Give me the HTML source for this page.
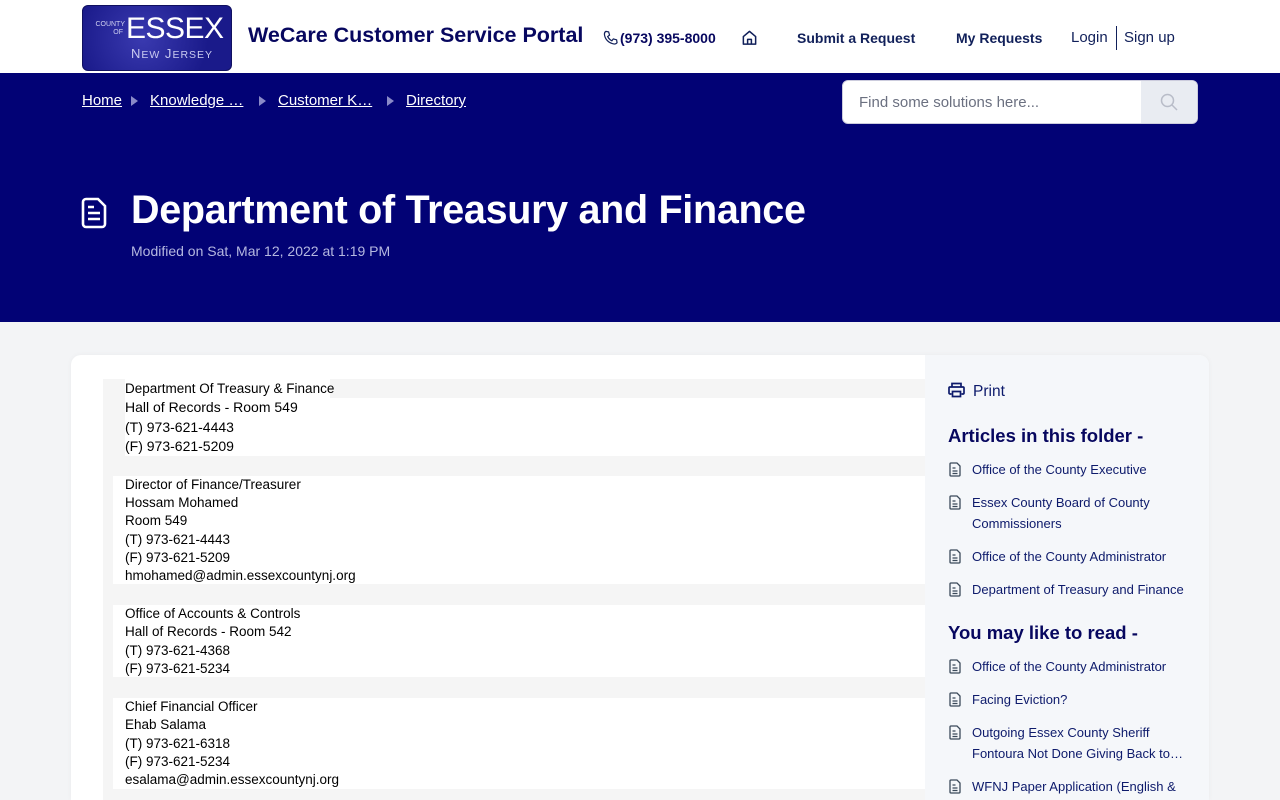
<!DOCTYPE html>
<html style="overflow:hidden;width:1280px;height:800px"><head><meta charset="utf-8"><style>
*{margin:0;padding:0;box-sizing:border-box}
body{width:1280px;height:800px;overflow:hidden;background:#f3f4f6;font-family:"Liberation Sans",sans-serif;position:relative}
.hdr{position:absolute;left:0;top:0;width:1280px;height:73px;background:#fff}
.logo{position:absolute;left:82px;top:5px;width:150px;height:66px;border-radius:6px;background:radial-gradient(circle at 40% 50%,#3a3ab0,#1a1a8a 70%);border:1px solid #101060;overflow:hidden}
.hero{position:absolute;left:0;top:73px;width:1280px;height:249px;background:#020275}
.nav{position:absolute;top:30px;font-size:14px;color:#11205a}
.bc{position:absolute;top:92px;font-size:15px;color:#fff;text-decoration:underline}
.tri{position:absolute;top:96px;width:0;height:0;border-left:7px solid #8a8ac8;border-top:5px solid transparent;border-bottom:5px solid transparent}
.card{position:absolute;left:71px;top:355px;width:1138px;height:445px;background:#fff;border-radius:10px 10px 0 0;overflow:hidden;box-shadow:0 0 6px rgba(0,0,0,.04)}
.side{position:absolute;left:925px;top:355px;width:284px;height:445px;background:#f5f7fa;border-top-right-radius:10px}
.t{position:absolute;font-size:14px;color:#000;line-height:18.5px;left:125px}
.blk{position:absolute;left:113px;width:812px;background:#fff}
.sl{position:absolute;left:972px;font-size:13px;color:#0d1a6b;line-height:21px;width:225px}
.ic{position:absolute;left:949px;width:12px;height:15px}
h3{position:absolute;left:948px;font-size:18.5px;color:#07075f;font-weight:bold}
</style></head><body>
<div class="hdr">
 <div class="logo">
  <div style="position:absolute;left:4px;top:15px;font-size:7px;color:#cfd0f0;line-height:8px;text-align:right;width:38px">COUNTY<br><span style="padding-right:2px">OF</span></div>
  <div style="position:absolute;left:43px;top:6px;font-size:30px;color:#fff;letter-spacing:-0.5px">ESSEX</div>
  <div style="position:absolute;left:48px;top:40px;font-size:13px;color:#c9caf0;letter-spacing:1px">N<span style="font-size:10.5px">EW</span> J<span style="font-size:10.5px">ERSEY</span></div>
 </div>
 <div style="position:absolute;left:248px;top:23px;font-size:21.5px;font-weight:bold;color:#07075f">WeCare Customer Service Portal</div>
 <svg style="position:absolute;left:603px;top:30px" width="15" height="15" viewBox="0 0 16 16"><path d="M3 1.5l3 .5 1 3.5-2 1.5c1 2 2.5 3.5 4.5 4.5l1.5-2 3.5 1 .5 3c-.5 1-1.5 1.5-3 1.5C6 14 2 10 1.5 4.5c0-1.5.5-2.5 1.5-3z" fill="none" stroke="#11205a" stroke-width="1.3"/></svg>
 <div class="nav" style="left:620px;color:#07075f;font-weight:bold">(973) 395-8000</div>
 <svg style="position:absolute;left:741px;top:29px" width="17" height="17" viewBox="0 0 18 18"><path d="M2.5 8L9 2.5 15.5 8v8h-13z M7 16v-5h4v5" fill="none" stroke="#11205a" stroke-width="1.6" stroke-linejoin="round"/></svg>
 <div class="nav" style="left:797px;font-weight:bold">Submit a Request</div>
 <div class="nav" style="left:956px;font-weight:bold">My Requests</div>
 <div class="nav" style="left:1071px;font-size:15px;top:29px">Login</div>
 <div style="position:absolute;left:1116px;top:26px;width:1px;height:24px;background:#11205a"></div>
 <div class="nav" style="left:1124px;font-size:15px;top:29px">Sign up</div>
</div>
<div class="hero"></div>
<span class="bc" style="left:82px">Home</span><span class="tri" style="left:131px"></span>
<span class="bc" style="left:150px">Knowledge …</span><span class="tri" style="left:259px"></span>
<span class="bc" style="left:278px">Customer K…</span><span class="tri" style="left:387px"></span>
<span class="bc" style="left:406px">Directory</span>
<div style="position:absolute;left:842px;top:80px;width:356px;height:44px;background:#fff;border-radius:6px;border:1px solid #ccd"></div>
<div style="position:absolute;left:1141px;top:81px;width:56px;height:42px;background:#e9ecf2;border-radius:0 6px 6px 0"></div>
<div style="position:absolute;left:859px;top:94px;font-size:15px;color:#6b7080">Find some solutions here...</div>
<svg style="position:absolute;left:1160px;top:93px" width="18" height="18" viewBox="0 0 18 18"><circle cx="7.5" cy="7.5" r="6" fill="none" stroke="#b8bcc8" stroke-width="1.5"/><path d="M12 12l5 5" stroke="#b8bcc8" stroke-width="1.5"/></svg>
<svg style="position:absolute;left:81px;top:197px" width="27" height="32" viewBox="0 0 27 32"><path d="M5 2h12l7 7v18a3 3 0 01-3 3H5a3 3 0 01-3-3V5a3 3 0 013-3z" fill="none" stroke="#fff" stroke-width="2.6"/><path d="M7 10h6M7 16h12M7 22h12" stroke="#fff" stroke-width="2.6"/></svg>
<div style="position:absolute;left:131px;top:188px;font-size:39.5px;font-weight:bold;color:#fff;letter-spacing:-0.3px">Department of Treasury and Finance</div>
<div style="position:absolute;left:131px;top:243px;font-size:14px;color:#b5b8e0">Modified on Sat, Mar 12, 2022 at 1:19 PM</div>

<div class="card"></div>
<div style="position:absolute;left:103px;top:379px;width:822px;height:421px;background:#f5f5f5"></div>
<div style="position:absolute;left:125px;top:379px;width:205px;height:19px;background:#fff"></div>
<div class="blk" style="left:125px;top:398px;height:58px"></div>
<div class="blk" style="top:476px;height:108px"></div>
<div class="blk" style="top:605px;height:72px"></div>
<div class="blk" style="top:698px;height:91px"></div>
<div class="t" style="top:380px;font-size:13.5px">Department Of Treasury &amp; Finance</div>
<div class="t" style="top:398px;line-height:19.5px">Hall of Records - Room 549<br>(T) 973-621-4443<br>(F) 973-621-5209</div>
<div class="t" style="top:476px;line-height:18.2px;font-size:13.5px">Director of Finance/Treasurer<br>Hossam Mohamed<br>Room 549<br>(T) 973-621-4443<br>(F) 973-621-5209<br>hmohamed@admin.essexcountynj.org</div>
<div class="t" style="top:605px;line-height:18.3px;font-size:13.5px">Office of Accounts &amp; Controls<br>Hall of Records - Room 542<br>(T) 973-621-4368<br>(F) 973-621-5234</div>
<div class="t" style="top:698px;line-height:18.3px;font-size:13.5px">Chief Financial Officer<br>Ehab Salama<br>(T) 973-621-6318<br>(F) 973-621-5234<br>esalama@admin.essexcountynj.org</div>

<div class="side"></div>
<svg style="position:absolute;left:948px;top:382px" width="17" height="16" viewBox="0 0 17 16"><path d="M4 5V1.5h9V5M3.5 12H2a1 1 0 01-1-1V6a1 1 0 011-1h13a1 1 0 011 1v5a1 1 0 01-1 1h-1.5M4.5 9.5h8v5h-8z" fill="none" stroke="#0d1a6b" stroke-width="1.7"/></svg>
<div style="position:absolute;left:973px;top:383px;font-size:15.5px;color:#0d1a6b">Print</div>
<h3 style="top:425px">Articles in this folder -</h3>
<h3 style="top:622px">You may like to read -</h3>
<div class="sl" style="top:459px">Office of the County Executive</div>
<div class="sl" style="top:492px">Essex County Board of County Commissioners</div>
<div class="sl" style="top:546px">Office of the County Administrator</div>
<div class="sl" style="top:579px">Department of Treasury and Finance</div>
<div class="sl" style="top:656px">Office of the County Administrator</div>
<div class="sl" style="top:689px">Facing Eviction?</div>
<div class="sl" style="top:722px">Outgoing Essex County Sheriff Fontoura Not Done Giving Back to…</div>
<div class="sl" style="top:776px">WFNJ Paper Application (English &amp;</div>
<svg width="0" height="0" style="position:absolute"><defs><symbol id="d" viewBox="0 0 12 15"><path d="M2 1h6l3 3v9a1 1 0 01-1 1H2a1 1 0 01-1-1V2a1 1 0 011-1z M3.5 6h3M3.5 9h5M3.5 11.5h5" fill="none" stroke="#3b4a5a" stroke-width="1.3"/></symbol></defs></svg>
<svg class="ic" style="top:462px"><use href="#d"/></svg>
<svg class="ic" style="top:495px"><use href="#d"/></svg>
<svg class="ic" style="top:549px"><use href="#d"/></svg>
<svg class="ic" style="top:582px"><use href="#d"/></svg>
<svg class="ic" style="top:659px"><use href="#d"/></svg>
<svg class="ic" style="top:692px"><use href="#d"/></svg>
<svg class="ic" style="top:725px"><use href="#d"/></svg>
<svg class="ic" style="top:779px"><use href="#d"/></svg>
</body></html>
